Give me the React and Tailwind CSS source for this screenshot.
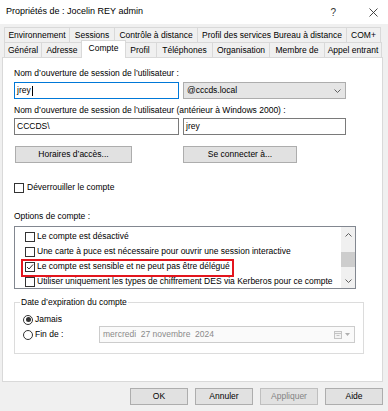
import React from 'react';

const rowOne = [
  { label: 'Environnement', w: 'w-[66px]' },
  { label: 'Sessions', w: 'w-[45px]' },
  { label: 'Contrôle à distance', w: 'w-[83px]' },
  { label: 'Profil des services Bureau à distance', w: 'w-[149px]' },
  { label: 'COM+', w: 'w-[34px]' },
];

const rowTwo = [
  { label: 'Général', w: 'w-[38px]' },
  { label: 'Adresse', w: 'w-[41px]' },
  { label: 'Compte', w: 'w-[41px]', wActive: 'w-[45px]', active: true },
  { label: 'Profil', w: 'w-[33px]' },
  { label: 'Téléphones', w: 'w-[56px]' },
  { label: 'Organisation', w: 'w-[57px]' },
  { label: 'Membre de', w: 'w-[55px]' },
  { label: 'Appel entrant', w: 'w-[57px]' },
];

const options = [
  { label: 'Le compte est désactivé' },
  { label: 'Une carte à puce est nécessaire pour ouvrir une session interactive' },
  { label: 'Le compte est sensible et ne peut pas être délégué', checked: true },
  { label: 'Utiliser uniquement les types de chiffrement DES via Kerberos pour ce compte' },
];

const Tab = ({ label, w, wActive, first, active }) => {
  if (active) {
    return (
      <div className={`relative z-10 -mx-[2px] -mt-[2px] h-[18px] ${wActive} flex justify-center border border-b-0 border-[#d9d9d9] bg-white pt-[2px] leading-[11px]`}>
        {label}
      </div>
    );
  }
  return (
    <div className={`h-[15px] ${w} flex items-center justify-center border-t border-r ${first ? 'border-l' : ''} border-[#d9d9d9] bg-[#f0f0f0] leading-[11px]`}>
      {label}
    </div>
  );
};

const Checkbox = ({ checked }) => (
  <span className="flex h-[10px] w-[10px] shrink-0 items-center justify-center border border-[#333333] bg-white">
    {checked && (
      <svg width="8" height="8" viewBox="0 0 8 8">
        <polyline points="1,4 3,6 7,1.5" fill="none" stroke="#333333" strokeWidth="1" />
      </svg>
    )}
  </span>
);

const Radio = ({ checked }) => (
  <span className="flex h-[10px] w-[10px] shrink-0 items-center justify-center rounded-full border border-[#333333] bg-white">
    {checked && <span className="h-[5px] w-[5px] rounded-full bg-[#333333]" />}
  </span>
);

const Chevron = ({ down }) => (
  <svg width="7" height="4" viewBox="0 0 7 4">
    <polyline
      points={down ? '0.5,0.5 3.5,3.5 6.5,0.5' : '0.5,3.5 3.5,0.5 6.5,3.5'}
      fill="none"
      stroke="#606060"
      strokeWidth="1"
    />
  </svg>
);

const Button = ({ children, className = '' }) => (
  <div className={`flex h-[17px] items-center justify-center border border-[#adadad] bg-[#e1e1e1] leading-[11px] ${className}`}>
    {children}
  </div>
);

export default function App() {
  return (
    <div className="h-[411px] w-[388px] overflow-hidden bg-[#f0f0f0] font-['Liberation_Sans',Arial,sans-serif] text-[8.5px] text-black">
      {/* title bar */}
      <div className="flex h-[24px] items-center bg-white pl-[6px] pr-[10px] text-[9px]">
        <span className="flex-1">Propriétés de : Jocelin REY admin</span>
        <span className="mr-[33px] text-[10px] text-[#333]">?</span>
        <svg width="9" height="9" viewBox="0 0 9 9">
          <path d="M0.5 0.5 L8.5 8.5 M8.5 0.5 L0.5 8.5" stroke="#333" strokeWidth="0.9" />
        </svg>
      </div>

      {/* tabs */}
      <div className="px-[4px] pt-[3px]">
        <div className="flex">
          {rowOne.map((t, i) => (
            <Tab key={t.label} {...t} first={i === 0} />
          ))}
        </div>
        <div className="flex h-[15px] items-start">
          {rowTwo.map((t, i) => (
            <Tab key={t.label} {...t} first={i === 0} />
          ))}
        </div>
      </div>

      {/* panel */}
      <div className="mx-[2px] h-[325px] w-[381px] border border-[#d9d9d9] bg-white pl-[11px] pt-[10px] leading-[11px]">
        <div className="h-[11px]">Nom d’ouverture de session de l’utilisateur :</div>
        <div className="mt-[3px] flex gap-[4px]">
          <div className="flex h-[17px] w-[165px] items-center border border-[#0078d7] pl-[2px]">
            jrey<span className="ml-[1px] h-[10px] w-px bg-black" />
          </div>
          <div className="flex h-[17px] w-[163px] items-center justify-between border border-[#adadad] bg-[#e5e5e5] pl-[3px] pr-[4px]">
            <span>@cccds.local</span>
            <Chevron down />
          </div>
        </div>

        <div className="mt-[6px] h-[11px]">Nom d’ouverture de session de l’utilisateur (antérieur à Windows 2000) :</div>
        <div className="mt-[2px] flex gap-[4px]">
          <div className="flex h-[17px] w-[165px] items-center border border-[#7a7a7a] pl-[2px]">CCCDS\</div>
          <div className="flex h-[17px] w-[163px] items-center border border-[#7a7a7a] pl-[2px]">jrey</div>
        </div>

        <div className="mt-[11px] flex">
          <Button className="ml-[1px] w-[117px]">Horaires d’accès...</Button>
          <Button className="ml-[51px] w-[114px]">Se connecter à...</Button>
        </div>

        <div className="mt-[19px] flex h-[11px] items-center gap-[3px]">
          <Checkbox />
          <span>Déverrouiller le compte</span>
        </div>

        <div className="mt-[18px] h-[11px]">Options de compte :</div>
        <div className="mt-[4px] flex h-[63px] w-[342px] border border-[#828790]">
          <div className="relative flex-1 overflow-hidden pl-[10px] pt-[2px]">
            {options.map((o) => (
              <div key={o.label} className="flex h-[15px] items-center gap-[2px] whitespace-nowrap">
                <Checkbox checked={o.checked} />
                <span>{o.label}</span>
              </div>
            ))}
            <div className="absolute left-[6px] top-[32px] h-[18px] w-[213px] border-2 border-[#e3151d]" />
          </div>
          <div className="flex w-[14px] flex-col bg-[#f0f0f0]">
            <div className="flex h-[15px] items-center justify-center">
              <Chevron />
            </div>
            <div className="mt-[10px] h-[15px] bg-[#cdcdcd]" />
            <div className="flex-1" />
            <div className="flex h-[14px] items-center justify-center">
              <Chevron down />
            </div>
          </div>
        </div>

        <div className="mt-[13px] h-[52px] w-[350px] border border-[#dcdcdc]">
          <div className="-mt-[6px] ml-[5px] w-fit bg-white px-[1px] leading-[11px]">Date d’expiration du compte</div>
          <div className="mt-[6px] flex h-[11px] items-center gap-[2px] pl-[8px]">
            <Radio checked />
            <span>Jamais</span>
          </div>
          <div className="mt-[1px] flex items-center pl-[8px]">
            <div className="flex w-[76px] items-center gap-[2px]">
              <Radio />
              <span>Fin de :</span>
            </div>
            <div className="flex h-[17px] w-[256px] items-center justify-between border border-[#cccccc] bg-[#fafafa] pl-[3px] pr-[4px] text-[#8a8a8a]">
              <span className="whitespace-pre">mercredi  27 novembre  2024</span>
              <span className="flex items-center gap-[3px]">
                <svg width="8" height="8" viewBox="0 0 8 8">
                  <rect x="0.5" y="0.5" width="7" height="7" fill="#f3f3f3" stroke="#c4c4c4" />
                  <path d="M0.5 2.5 H7.5 M2.5 4.5 H5.5" stroke="#c4c4c4" strokeWidth="1" />
                </svg>
                <svg width="5" height="3" viewBox="0 0 5 3">
                  <polygon points="0,0 5,0 2.5,3" fill="#b0b0b0" />
                </svg>
              </span>
            </div>
          </div>
        </div>
      </div>

      {/* dialog buttons */}
      <div className="mt-[6px] flex justify-end gap-[7px] pr-[5px]">
        <Button className="w-[58px] border-[#0078d7]">OK</Button>
        <Button className="w-[58px]">Annuler</Button>
        <Button className="w-[58px] border-[#bfbfbf] bg-[#cccccc] text-[#838383]">Appliquer</Button>
        <Button className="w-[58px]">Aide</Button>
      </div>
    </div>
  );
}
